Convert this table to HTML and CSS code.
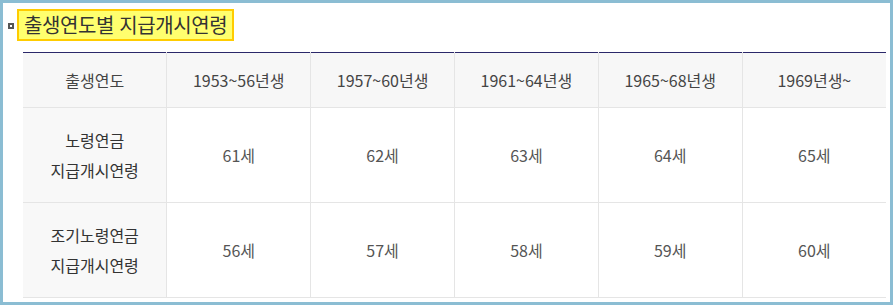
FILE: index.html
```html
<!DOCTYPE html>
<html lang="ko">
<head>
<meta charset="utf-8">
<title>출생연도별 지급개시연령</title>
<link rel="stylesheet" href="styles.css">
</head>
<body>
<div class="frame">
  <div class="title-row">
    <span class="bullet"></span>
    <h2 class="title">출생연도별 지급개시연령</h2>
  </div>
  <table class="age-table">
    <thead>
      <tr>
        <th>출생연도</th>
        <th>1953~56년생</th>
        <th>1957~60년생</th>
        <th>1961~64년생</th>
        <th>1965~68년생</th>
        <th>1969년생~</th>
      </tr>
    </thead>
    <tbody>
      <tr>
        <th>노령연금<br>지급개시연령</th>
        <td>61세</td>
        <td>62세</td>
        <td>63세</td>
        <td>64세</td>
        <td>65세</td>
      </tr>
      <tr>
        <th>조기노령연금<br>지급개시연령</th>
        <td>56세</td>
        <td>57세</td>
        <td>58세</td>
        <td>59세</td>
        <td>60세</td>
      </tr>
    </tbody>
  </table>
</div>
</body>
</html>
```
FILE: styles.css
```css
html, body {
  margin: 0;
  padding: 0;
  background: #ffffff;
}
body {
  font-family: "Noto Sans CJK KR", "Noto Sans", sans-serif;
  color: #333333;
}
.frame {
  box-sizing: border-box;
  width: 893px;
  height: 305px;
  border: 3px solid #8bbdd3;
  background: #ffffff;
  padding: 6px 4px 0 20px;
  overflow: hidden;
}
.title-row {
  display: flex;
  align-items: center;
  margin-left: -15px;
}
.bullet {
  box-sizing: border-box;
  width: 6px;
  height: 6px;
  border: 2px solid #555555;
  background: #ffffff;
  margin: 2px 3px 0 0;
}
.title {
  margin: 0;
  box-sizing: border-box;
  height: 32px;
  padding: 0 5px;
  background: #ffff6e;
  border: 2px solid #ffcc00;
  font-size: 20px;
  font-weight: 400;
  line-height: 27px;
  color: #333333;
  letter-spacing: -0.4px;
}
.age-table {
  margin-top: 11px;
  width: 863px;
  border-collapse: collapse;
  table-layout: fixed;
  border-top: 1px solid #2b286a;
}
.age-table th,
.age-table td {
  border: 1px solid #e5e5e5;
  text-align: center;
  vertical-align: middle;
  font-size: 16px;
  line-height: 30px;
  padding: 0;
}
.age-table tr > :first-child {
  border-left: none;
}
.age-table tr > :last-child {
  border-right: none;
}
.age-table thead th {
  height: 54px;
  background: #f7f7f7;
  font-weight: 400;
  color: #444444;
  border-top: 1px solid #2b286a;
}
.age-table tbody th {
  height: 94px;
  background: #f8f8f8;
  font-weight: 400;
  color: #333333;
}
.age-table tbody td {
  background: #ffffff;
  color: #555555;
}
```
